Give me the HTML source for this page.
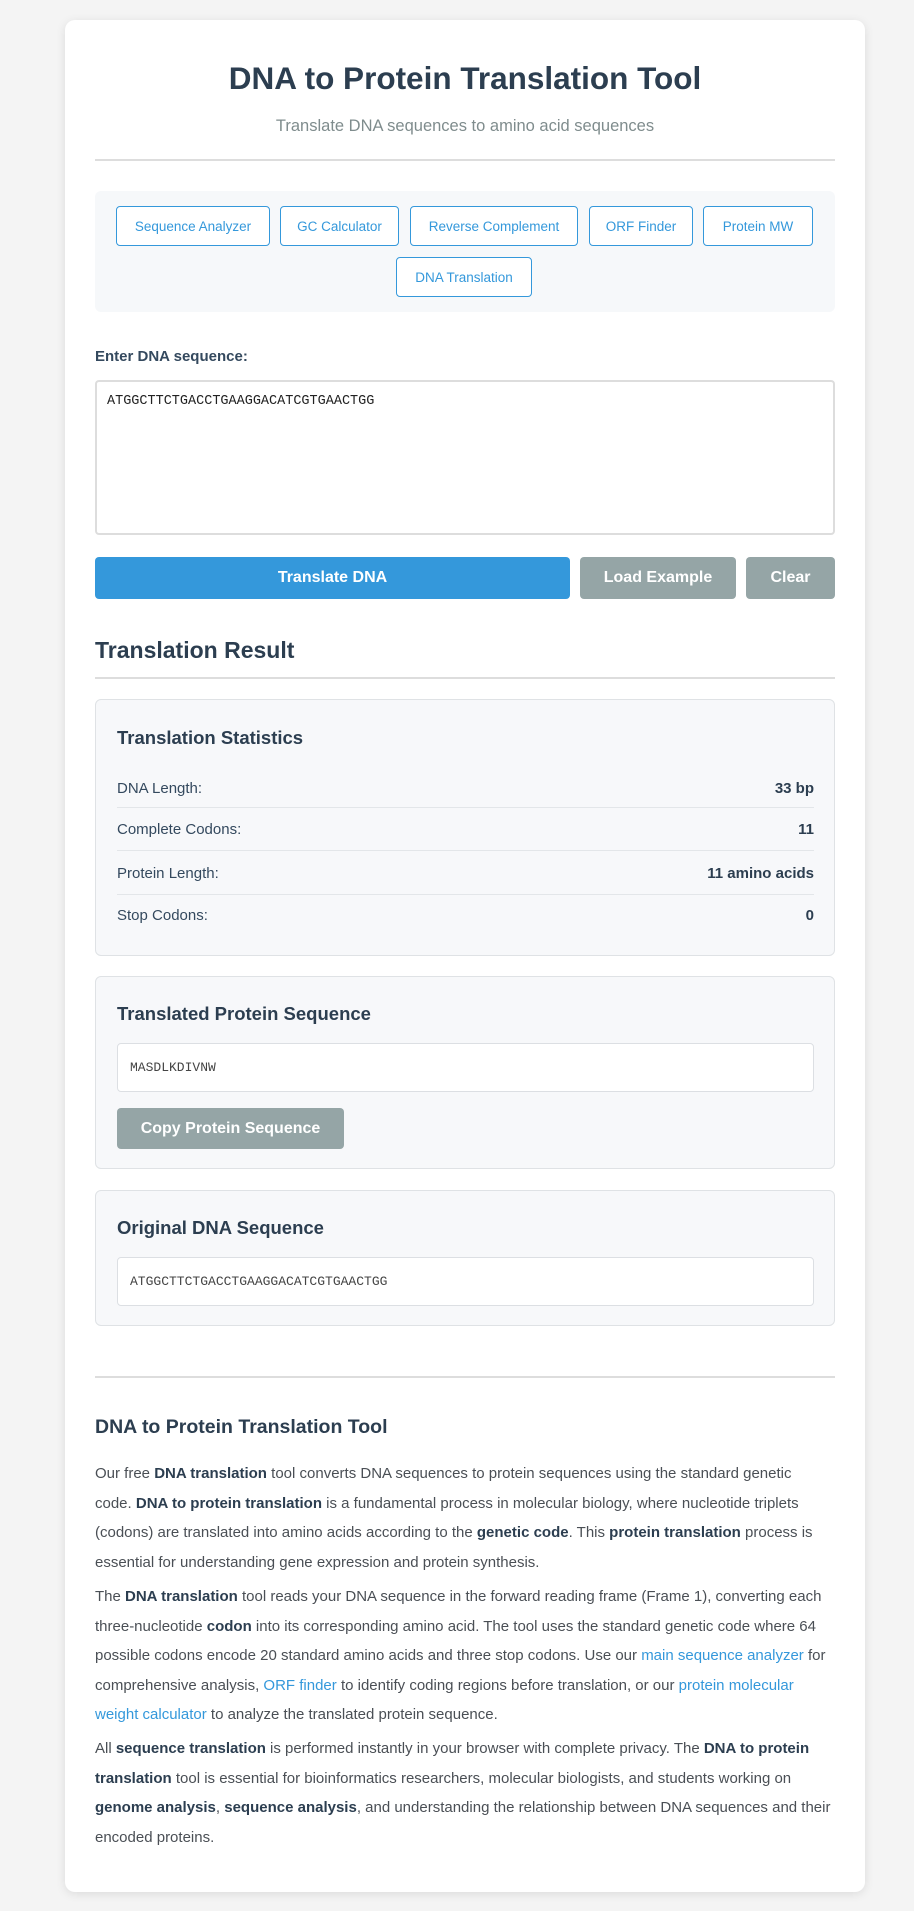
<!DOCTYPE html>
<html><head><meta charset="utf-8"><style>
*{box-sizing:border-box;margin:0;padding:0}
body{width:914px;height:1911px;background:#f4f4f4;font-family:"Liberation Sans",sans-serif;color:#2c3e50;position:relative;overflow:hidden}
.card{position:absolute;left:65px;top:20px;width:800px;height:1872px;background:#fff;border-radius:10px;box-shadow:0 2px 10px rgba(0,0,0,.1)}
.a{position:absolute}
.c{text-align:center}
.hr{position:absolute;left:95px;width:740px;height:2px;background:#ddd}
.nav{left:95px;top:191px;width:740px;height:121px;background:#f6f8fa;border-radius:6px}
.nb{position:absolute;height:40px;border:1px solid #3498db;border-radius:4px;background:#fff;color:#3498db;font-size:13.5px;display:flex;align-items:center;justify-content:center}
.btn{position:absolute;top:557px;height:42px;border-radius:4px;color:#fff;font-weight:bold;font-size:16px;display:flex;align-items:center;justify-content:center}
.box{position:absolute;left:95px;width:740px;background:#f7f8fa;border:1px solid #dfe2e5;border-radius:6px}
.bt{position:absolute;left:21px;font-size:18.5px;font-weight:bold;color:#2c3e50;line-height:24px}
.row{position:absolute;left:21px;width:697px;font-size:15px;color:#34495e;line-height:20px}
.row b{position:absolute;right:0;top:0;font-weight:bold;color:#2c3e50}
.sep{position:absolute;left:21px;width:697px;height:1px;background:#e3e6e9}
.out{position:absolute;left:21px;width:697px;height:49px;background:#fff;border:1px solid #dcdfe3;border-radius:4px;font-family:"Liberation Mono",monospace;font-size:13px;color:#444;padding-left:12px;line-height:47px}
.p{position:absolute;left:95px;width:745px;font-size:15px;line-height:29.6px;color:#4a4f55;white-space:nowrap}
.p b{color:#2c3e50}
.p a{color:#3498db;text-decoration:none}
</style></head><body>
<div class="card"></div>
<div class="a c" style="left:65px;width:800px;top:58px;font-size:31.5px;font-weight:bold;line-height:40px">DNA to Protein Translation Tool</div>
<div class="a c" style="left:65px;width:800px;top:115px;font-size:16.5px;color:#7f8c8d;line-height:22px">Translate DNA sequences to amino acid sequences</div>
<div class="hr" style="top:159px"></div>
<div class="a nav">
<div class="nb" style="left:21px;top:15px;width:154px">Sequence Analyzer</div>
<div class="nb" style="left:185px;top:15px;width:119px">GC Calculator</div>
<div class="nb" style="left:315px;top:15px;width:168px">Reverse Complement</div>
<div class="nb" style="left:494px;top:15px;width:104px">ORF Finder</div>
<div class="nb" style="left:608px;top:15px;width:110px">Protein MW</div>
<div class="nb" style="left:301px;top:66px;width:136px">DNA Translation</div>
</div>
<div class="a" style="left:95px;top:348px;font-size:15px;font-weight:bold;color:#34495e">Enter DNA sequence:</div>
<div class="a" style="left:95px;top:380px;width:740px;height:155px;border:2px solid #ddd;border-radius:4px;background:#fff;padding:12px 10px;font-family:'Liberation Mono',monospace;font-size:13.5px;color:#222">ATGGCTTCTGACCTGAAGGACATCGTGAACTGG</div>
<div class="btn" style="left:95px;width:475px;background:#3498db">Translate DNA</div>
<div class="btn" style="left:580px;width:156px;background:#95a5a6">Load Example</div>
<div class="btn" style="left:746px;width:89px;background:#95a5a6">Clear</div>
<div class="a" style="left:95px;top:636px;font-size:23px;font-weight:bold;line-height:28px">Translation Result</div>
<div class="hr" style="top:677px"></div>
<div class="box" style="top:699px;height:257px">
<div class="bt" style="top:26px">Translation Statistics</div>
<div class="row" style="top:79px">DNA Length:<b>33 bp</b></div>
<div class="sep" style="top:107px"></div>
<div class="row" style="top:120px">Complete Codons:<b>11</b></div>
<div class="sep" style="top:150px"></div>
<div class="row" style="top:164px">Protein Length:<b>11 amino acids</b></div>
<div class="sep" style="top:194px"></div>
<div class="row" style="top:206px">Stop Codons:<b>0</b></div>
</div>
<div class="box" style="top:976px;height:193px">
<div class="bt" style="top:25px">Translated Protein Sequence</div>
<div class="out" style="top:66px">MASDLKDIVNW</div>
<div class="a" style="left:21px;top:131px;width:227px;height:41px;background:#95a5a6;border-radius:4px;color:#fff;font-weight:bold;font-size:16px;display:flex;align-items:center;justify-content:center">Copy Protein Sequence</div>
</div>
<div class="box" style="top:1190px;height:136px">
<div class="bt" style="top:25px">Original DNA Sequence</div>
<div class="out" style="top:66px">ATGGCTTCTGACCTGAAGGACATCGTGAACTGG</div>
</div>
<div class="hr" style="top:1376px"></div>
<div class="a" style="left:95px;top:1414px;font-size:19.5px;font-weight:bold;line-height:26px">DNA to Protein Translation Tool</div>
<div class="p" style="top:1459px">Our free <b>DNA translation</b> tool converts DNA sequences to protein sequences using the standard genetic<br>code. <b>DNA to protein translation</b> is a fundamental process in molecular biology, where nucleotide triplets<br>(codons) are translated into amino acids according to the <b>genetic code</b>. This <b>protein translation</b> process is<br>essential for understanding gene expression and protein synthesis.</div>
<div class="p" style="top:1582px">The <b>DNA translation</b> tool reads your DNA sequence in the forward reading frame (Frame 1), converting each<br>three-nucleotide <b>codon</b> into its corresponding amino acid. The tool uses the standard genetic code where 64<br>possible codons encode 20 standard amino acids and three stop codons. Use our <a>main sequence analyzer</a> for<br>comprehensive analysis, <a>ORF finder</a> to identify coding regions before translation, or our <a>protein molecular</a><br><a>weight calculator</a> to analyze the translated protein sequence.</div>
<div class="p" style="top:1734px">All <b>sequence translation</b> is performed instantly in your browser with complete privacy. The <b>DNA to protein</b><br><b>translation</b> tool is essential for bioinformatics researchers, molecular biologists, and students working on<br><b>genome analysis</b>, <b>sequence analysis</b>, and understanding the relationship between DNA sequences and their<br>encoded proteins.</div>
</body></html>
